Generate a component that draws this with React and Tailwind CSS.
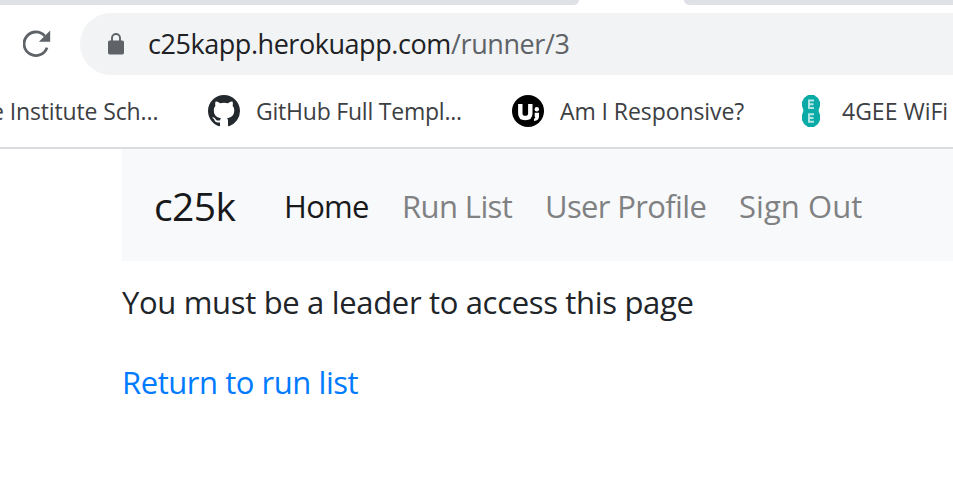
import React from "react";

function Reload() {
  return (
    <svg width="28" height="28" viewBox="0 0 28 28" className="shrink-0" fill="none">
      <path d="M24 17.6A11.8 11.8 0 1 1 21.8 6.1" stroke="#5f6368" strokeWidth="2.8" />
      <path d="M27.200 .5v11.3H15.900z" fill="#5f6368" />
    </svg>
  );
}

function Lock() {
  return (
    <svg width="16" height="22" viewBox="0 0 16 22" className="shrink-0">
      <path d="M4 8.5V5a4 4 0 0 1 8 0v3.5" fill="none" stroke="#5f6368" strokeWidth="1.9" />
      <rect y="7.5" width="16" height="14" rx="1.7" fill="#5f6368" />
    </svg>
  );
}

function GitHub() {
  return (
    <svg width="32" height="32" viewBox="0 0 16 16" className="shrink-0" fill="#24292e">
      <path d="M8 0C3.58 0 0 3.58 0 8c0 3.54 2.29 6.53 5.47 7.59.4.07.55-.17.55-.38 0-.19-.01-.82-.01-1.49-2.01.37-2.53-.49-2.69-.94-.09-.23-.48-.94-.82-1.13-.28-.15-.68-.52-.01-.53.63-.01 1.08.58 1.23.82.72 1.21 1.87.87 2.33.66.07-.52.28-.87.51-1.07-1.78-.2-3.64-.89-3.64-3.95 0-.87.31-1.59.82-2.15-.08-.2-.36-1.02.08-2.12 0 0 .67-.21 2.2.82.64-.18 1.32-.27 2-.27s1.36.09 2 .27c1.53-1.04 2.2-.82 2.2-.82.44 1.1.16 1.92.08 2.12.51.56.82 1.27.82 2.15 0 3.07-1.87 3.75-3.65 3.95.29.25.54.73.54 1.48 0 1.07-.01 1.93-.01 2.2 0 .21.15.46.55.38A8.01 8.01 0 0 0 16 8c0-4.42-3.58-8-8-8z" />
    </svg>
  );
}

function Ui() {
  return (
    <svg width="32" height="32" viewBox="0 0 32 32" className="shrink-0">
      <circle cx="16" cy="16" r="16" fill="#000" />
      <path d="M8.300 9v9.500q0 4.500 5 4.500t5-4.500V9" fill="none" stroke="#fff" strokeWidth="4.400" />
      <circle cx="24.800" cy="14.200" r="2.200" fill="#fff" />
      <path d="M22.700 17.800H27v3.700q0 4-5 4.500v-2.300q1.300-.5 1.300-1.700h-.6z" fill="#fff" />
    </svg>
  );
}

function EE() {
  return (
    <svg width="18" height="32" viewBox="0 0 18 32" className="shrink-0">
      <path d="M6 0h6l4 3 2 4v4l-1.500 4.500L18 20v5l-2 4-4 3H6l-4-3-2-4v-5l1.500-4.500L0 11V7l2-4z" fill="#0aaba7" />
      <path d="M12 5.500H7v7.500h5M7 9.200h4.500M12 19.200H7v7.500h5M7 23h4.500" fill="none" stroke="#b5e6e4" strokeWidth="1.900" />
    </svg>
  );
}

export default function App() {
  return (
    <div className="h-[497px] w-[953px] overflow-hidden bg-white font-['Open_Sans',sans-serif] whitespace-nowrap">
      <div className="flex h-[5px] justify-between">
        <div className="w-[579px] rounded-br-[14px] bg-[#dee1e6]" />
        <div className="w-[269px] rounded-bl-[14px] bg-[#dee1e6]" />
      </div>

      <div className="flex h-[78px] items-center pl-[23px]">
        <Reload />
        <div className="ml-[29px] flex h-[62px] flex-1 items-center rounded-l-full bg-[#f1f3f4] pl-7">
          <Lock />
          <div className="ml-6 pb-px text-[27px] leading-[38px] text-[#202124]">
            <span className="inline-block w-[303px] tracking-[-0.45px]">c25kapp.herokuapp.com</span>
            <span className="tracking-[-0.4px] text-[#5f6368]">/runner/3</span>
          </div>
        </div>
      </div>

      <div className="flex h-16 items-center pb-2 text-[23px] leading-8 text-[#3c4043]">
        <div className="-ml-[9px] w-[217px] pb-px tracking-[-0.13px]">e Institute Sch...</div>
        <GitHub />
        <div className="ml-4 w-64 pb-px tracking-[-0.22px]">GitHub Full Templ...</div>
        <Ui />
        <div className="ml-4 w-[242px] pb-px tracking-[-0.08px]">Am I Responsive?</div>
        <EE />
        <div className="ml-[22px] pb-px tracking-[0px]">4GEE WiFi</div>
      </div>
      <div className="h-0.5 bg-[#dadce0]" />

      <div className="ml-[122px]">
        <nav className="flex h-28 items-center bg-[#f8f9fb] pt-0.5 pl-8 text-[31px] text-[#808182]">
          <a className="w-[130px] text-[39px] tracking-[-0.6px] text-[#18191a]">c25k</a>
          <a className="w-[118px] tracking-[-0.7px] text-[#18191a]">Home</a>
          <a className="w-[143px] tracking-[-0.6px]">Run List</a>
          <a className="w-[194px] tracking-[-0.65px]">User Profile</a>
          <a className="tracking-[0.05px]">Sign Out</a>
        </nav>
        <p className="mt-[17px] text-[31px] leading-12 tracking-[-0.33px] text-[#212529]">You must be a leader to access this page</p>
        <a className="mt-8 block text-[31px] leading-12 tracking-[-0.45px] text-[#007bff]">Return to run list</a>
      </div>
    </div>
  );
}
